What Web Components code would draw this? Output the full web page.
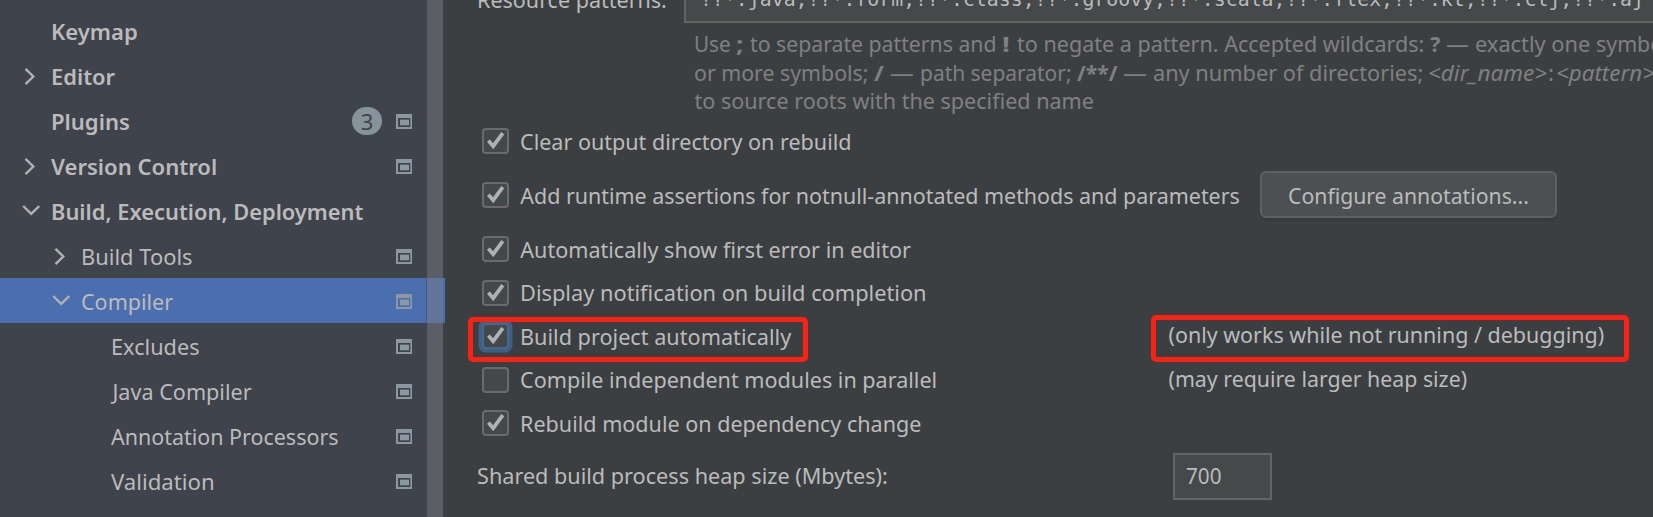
<!DOCTYPE html>
<html lang="en"><head><meta charset="utf-8"><title>Settings</title>
<style>
html,body{margin:0;height:100%;overflow:hidden}
body{font:22px/26px "Noto Sans","Open Sans",sans-serif;color:#bbbbbb;background:#3c3f41}
</style></head><body><settings-window></settings-window>
<script>
const define=(name,html,setup)=>customElements.define(name,class extends HTMLElement{
  connectedCallback(){
    if(this.shadowRoot)return;
    const t=document.createElement('template');
    t.innerHTML=typeof html==='function'?html(this):html;
    this.attachShadow({mode:'open'}).append(t.content.cloneNode(true));
    if(setup)setup(this,this.shadowRoot);
  }
});

// One line of text set to a given width; "adv" uses advance width, otherwise the ink width.
// "dx" nudges the line sideways for optical alignment.
const ctx=document.createElement('canvas').getContext('2d');
define('fit-text',`<style>:host{display:inline-block;flex:none;white-space:pre;overflow:visible}
span{display:inline-block;white-space:pre;transform-origin:0 50%}</style><span><slot></slot></span>`,(el,root)=>{
  const w=+el.getAttribute('w'),cs=getComputedStyle(el),span=root.querySelector('span');
  ctx.font=`${cs.fontStyle} ${cs.fontWeight} ${cs.fontSize} ${cs.fontFamily}`;
  const m=ctx.measureText(el.textContent);
  const adv=el.hasAttribute('adv');
  const left=adv?0:m.actualBoundingBoxLeft;
  const nat=adv?m.width:m.actualBoundingBoxLeft+m.actualBoundingBoxRight;
  const s=w/nat,dx=+(el.getAttribute('dx')||0);
  el.style.width=w+'px';
  span.style.transform=`translateX(${left*s+dx}px) scaleX(${s})`;
});

define('tree-arrow',el=>`<style>:host{display:block;width:18px;height:45px;flex:none}svg{display:block}</style>
<svg width="18" height="45" fill="none" stroke="#afb1b3" stroke-width="2.4">${
 {right:'<path d="M3.5 15.8 11.3 23.5 3.5 31.2"/>',down:'<path d="M1.2 18 9.2 25.8 17.2 18"/>'}[el.getAttribute('dir')]||''}</svg>`);

define('project-icon',`<style>:host{display:block;width:16px;height:15px}svg{display:block}</style>
<svg width="16" height="15"><path fill="#8b98a1" fill-rule="evenodd" d="M0 0H16V15H0ZM2 4V13H14.3V4Z"/><path fill="#8b98a1" d="M4 5.6H13V11.3H4Z"/></svg>`);

define('tree-row',el=>`<style>
:host{display:flex;height:45px;flex:none;position:relative;box-sizing:border-box;padding-left:calc(22px + var(--level,0)*30px)}
:host([bold]){font-weight:600;}
:host([selected]){background:#4b6eaf;width:445px}
.t{line-height:45px;padding-top:1px;margin-left:var(--in,12px);flex:1}
project-icon{margin-top:16px}
.b{width:30px;height:28px;border-radius:14px;background:#87939a;color:#3f434b;margin:9px 14px 0 0;display:flex;justify-content:center;line-height:29px;font-weight:400}
.end{display:flex;position:absolute;left:352px;width:60px;justify-content:flex-end}
</style><tree-arrow dir="${el.getAttribute('arrow')||''}"></tree-arrow><div class="t"><slot></slot></div>
<div class="end">${el.hasAttribute('badge')?`<div class="b">${el.getAttribute('badge')}</div>`:''}${el.hasAttribute('icon')?'<project-icon></project-icon>':''}</div>`);

define('settings-tree',`<style>
:host{display:flex;width:443px;height:517px;background:#3f434b;position:relative;flex:none}
.rows{width:427px;display:flex;flex-direction:column;margin-top:-37px}
.bar{position:relative;width:16px;background:rgba(124,126,134,.47);box-shadow:-1px 0 0 rgba(70,70,80,.55)}
</style><div class="rows">
<tree-row bold><fit-text w="237">Appearance &amp; Behavior</fit-text></tree-row>
<tree-row bold><fit-text w="84" dx="1">Keymap</fit-text></tree-row>
<tree-row bold arrow="right"><fit-text w="62.5" dx="1">Editor</fit-text></tree-row>
<tree-row bold badge="3" icon><fit-text w="77">Plugins</fit-text></tree-row>
<tree-row bold arrow="right" icon><fit-text w="165" dx="-1">Version Control</fit-text></tree-row>
<tree-row bold arrow="down"><fit-text w="311.5">Build, Execution, Deployment</fit-text></tree-row>
<tree-row style="--level:1" arrow="right" icon><fit-text w="109" dx="1">Build Tools</fit-text></tree-row>
<tree-row style="--level:1" arrow="down" icon selected><fit-text w="91">Compiler</fit-text></tree-row>
<tree-row style="--level:2" icon><fit-text w="86" dx="1">Excludes</fit-text></tree-row>
<tree-row style="--level:2;--in:11px" icon><fit-text w="141" dx="-.5">Java Compiler</fit-text></tree-row>
<tree-row style="--level:2;--in:11px" icon><fit-text w="227">Annotation Processors</fit-text></tree-row>
<tree-row style="--level:2;--in:11px" icon><fit-text w="102">Validation</fit-text></tree-row>
</div><div class="bar"></div>`);

define('check-box',el=>`<style>
:host{display:block;width:27px;height:26px;box-sizing:border-box;border:2px solid #6b6b6b;border-radius:4px;background:#43494a;flex:none}
:host([focused]){border-color:#46688b;box-shadow:0 0 0 3.5px #3d6185}
svg{display:block;margin:-2px}
</style><svg width="27" height="26" fill="none" stroke="#b0b1b2" stroke-width="3.7">${el.hasAttribute('checked')?'<path d="M6.4 12.6 11.2 18.2 20.8 5.2"/>':''}</svg>`);

define('option-row',el=>`<style>:host{display:flex;height:var(--h);flex:none;padding-left:39px;align-items:flex-start}
.l{margin-left:12px;margin-top:var(--lt,0)}.n{margin-left:auto;width:484px;margin-top:var(--nt,0)}</style>
<check-box ${el.hasAttribute('checked')?'checked':''} ${el.hasAttribute('focused')?'focused':''}></check-box>
<div class="l"><slot></slot></div><slot name="extra"></slot><div class="n"><slot name="note"></slot></div>`);

define('push-button',`<style>:host{display:flex;justify-content:center;box-sizing:border-box;width:297px;height:47px;margin:-11px -600px 0 20px;border:2px solid #5e6162;border-radius:6px;background:#4c5052;line-height:45px;box-shadow:0 3px 1px rgba(50,50,50,.4);flex:none}</style><slot></slot>`);

define('text-field',`<style>:host{display:block;box-sizing:border-box;height:47px;border:2px solid #646464;background:#45494a;line-height:41px;flex:none}</style><slot></slot>`);

define('pattern-help',`<style>:host{display:block;height:105px;box-sizing:border-box;padding:6px 0 0 251px;color:#808080;flex:none}
div{display:flex;height:28.5px;line-height:28.5px;white-space:pre}b,i{display:contents}</style>
<div><fit-text adv w="42">Use </fit-text><b><fit-text adv w="14">; </fit-text></b><fit-text adv w="252">to separate patterns and </fit-text><b><fit-text adv w="15">! </fit-text></b><fit-text adv w="413">to negate a pattern. Accepted wildcards: </fit-text><b><fit-text adv w="16">? </fit-text></b><fit-text adv w="29">— </fit-text><fit-text adv w="121">exactly one </fit-text><fit-text adv w="84">symbol; </fit-text></div>
<div><fit-text adv w="180">or more symbols; </fit-text><b><fit-text adv w="16">/ </fit-text></b><fit-text adv w="30">— </fit-text><fit-text adv w="157">path separator; </fit-text><b><fit-text adv w="46">/**/ </fit-text></b><fit-text adv w="30">— </fit-text><fit-text adv w="276">any number of directories; </fit-text><i><fit-text adv w="119" dx="-1">&lt;dir_name&gt;</fit-text></i><fit-text adv w="6" style="margin-right:3px">:</fit-text><i><fit-text adv w="99" dx="-1">&lt;pattern&gt;</fit-text></i></div>
<div><fit-text w="399" dx=".5">to source roots with the specified name</fit-text></div>`);

define('compiler-page',`<style>
:host{display:flex;flex-direction:column;flex:1;height:517px;overflow:hidden;min-width:0;position:relative}
.top{display:flex;height:23px;align-items:flex-end;padding-left:35px;flex:none}
.top .label{height:47px;line-height:47px;width:206px;flex:none}
.pat{width:1100px;font-family:"DejaVu Sans Mono","Liberation Mono",monospace;font-size:20px;line-height:43px;padding-left:14px}
.heap{display:flex;height:47px;line-height:45px;padding-left:34px;flex:none}
.heap .label{width:696px}.heap text-field{width:99px;padding-left:11px}
.mark{position:absolute;box-sizing:border-box;border:5px solid #fb2113;border-radius:5px}
.m1{left:24.5px;top:317px;width:340.5px;height:45px}.m2{left:708px;top:315px;width:478px;height:47px}
</style>
<div class="top"><div class="label"><fit-text w="187" dx="1">Resource patterns:</fit-text></div>
<text-field class="pat"><fit-text adv w="944">!?*.java;!?*.form;!?*.class;!?*.groovy;!?*.scala;!?*.flex;!?*.kt;!?*.clj;!?*.aj</fit-text></text-field></div>
<pattern-help></pattern-help>
<option-row checked style="--h:54px"><fit-text w="329">Clear output directory on rebuild</fit-text></option-row>
<option-row checked style="--h:54px"><fit-text w="719" dx="-.7">Add runtime assertions for notnull-annotated methods and parameters</fit-text><push-button slot="extra"><fit-text w="239">Configure annotations...</fit-text></push-button></option-row>
<option-row checked style="--h:44px"><fit-text w="390.5" dx="-.7">Automatically show first error in editor</fit-text></option-row>
<option-row checked style="--h:43px;--lt:-1px"><fit-text w="403" dx="1">Display notification on build completion</fit-text></option-row>
<option-row checked focused style="--h:44px;--nt:-2px"><fit-text w="270" dx="1">Build project automatically</fit-text><fit-text slot="note" w="435" dx="-.5">(only works while not running / debugging)</fit-text></option-row>
<option-row style="--h:43px;--lt:-1px;--nt:-2px"><fit-text w="414.5">Compile independent modules in parallel</fit-text><fit-text slot="note" w="298" dx="-.5">(may require larger heap size)</fit-text></option-row>
<option-row checked style="--h:43px"><fit-text w="399" dx="1">Rebuild module on dependency change</fit-text></option-row>
<div class="heap"><div class="label"><fit-text w="409" dx="1">Shared build process heap size (Mbytes):</fit-text></div><text-field><fit-text w="35">700</fit-text></text-field></div>
<div class="mark m1"></div><div class="mark m2"></div>`);

define('settings-window',`<style>:host{display:flex;width:1653px;height:517px;overflow:hidden}</style><settings-tree></settings-tree><compiler-page></compiler-page>`);
</script></body></html>
